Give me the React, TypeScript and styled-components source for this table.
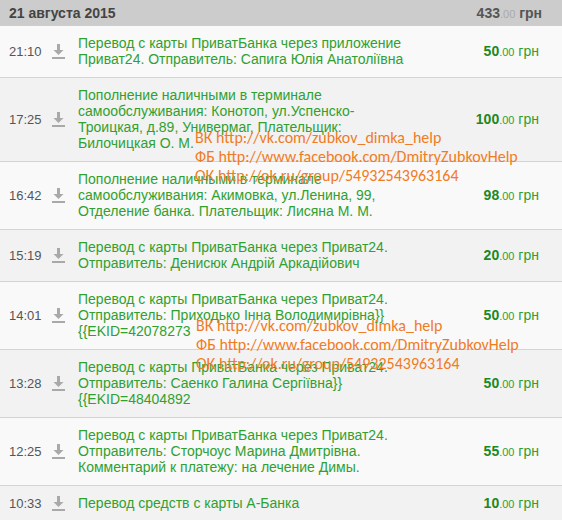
import React from "react";
import styled, { createGlobalStyle } from "styled-components";

const Global = createGlobalStyle`
  html, body { margin: 0; padding: 0; background: #f2f2f2; }
  body { font-family: Arial, "Liberation Sans", sans-serif; }
`;

const Page = styled.div`
  position: relative;
  width: 562px;
  min-height: 520px;
  background: #f2f2f2;
`;

const Header = styled.div`
  display: flex;
  align-items: center;
  justify-content: space-between;
  height: 26px;
  padding: 0 20px 0 9px;
  background: #cccccc;
  color: #444;
  font-size: 14px;
  font-weight: bold;
`;

const HeaderSum = styled.div`
  color: #555;
`;

const Cents = styled.span<{ $tone?: string }>`
  font-size: 11px;
  font-weight: normal;
  color: ${(p) => p.$tone || "inherit"};
`;

const Row = styled.div<{ $alt: boolean }>`
  display: flex;
  align-items: center;
  padding: 9px 23px 10px 9px;
  background: ${(p) => (p.$alt ? "#f2f2f2" : "#f9f9f9")};
  border-bottom: 1px solid #d4d4d4;
  &:last-child { border-bottom: none; }
`;

const Time = styled.div`
  width: 43px;
  flex: none;
  color: #555;
  font-size: 13px;
`;

const IconBox = styled.div`
  width: 26px;
  flex: none;
  display: flex;
  align-items: center;
`;

const Desc = styled.div`
  flex: 1;
  color: #30a030;
  font-size: 14px;
  line-height: 16px;
  white-space: nowrap;
`;

const Line = styled.div``;

const Amount = styled.div`
  flex: none;
  color: #30a030;
  font-size: 14px;
  white-space: nowrap;
  b { color: #1d881d; }
`;

const Watermark = styled.div<{ $top: number; $left: number }>`
  position: absolute;
  top: ${(p) => p.$top}px;
  left: ${(p) => p.$left}px;
  color: #f07b25;
  font-family: Carlito, Lato, "Open Sans", sans-serif;
  font-size: 16px;
  line-height: 19px;
  white-space: nowrap;
  pointer-events: none;
`;

const DownIcon = () => (
  <svg width="13" height="16" viewBox="0 0 13 16">
    <rect x="5" y="1" width="3" height="7" fill="#a9a9a9" />
    <polygon points="1.5,7 11.5,7 6.5,12" fill="#a9a9a9" />
    <rect x="0" y="14" width="13" height="2" fill="#a9a9a9" />
  </svg>
);

const rows = [
  { t: "21:10", lines: ["Перевод с карты ПриватБанка через приложение", "Приват24. Отправитель: Сапига Юлія Анатоліївна"], a: "50" },
  { t: "17:25", lines: ["Пополнение наличными в терминале", "самообслуживания: Конотоп, ул.Успенско-", "Троицкая, д.89, Универмаг, Плательщик:", "Билочицкая О. М."], a: "100" },
  { t: "16:42", lines: ["Пополнение наличными в терминале", "самообслуживания: Акимовка, ул.Ленина, 99,", "Отделение банка. Плательщик: Лисяна М. М."], a: "98" },
  { t: "15:19", lines: ["Перевод с карты ПриватБанка через Приват24.", "Отправитель: Денисюк Андрій Аркадійович"], a: "20" },
  { t: "14:01", lines: ["Перевод с карты ПриватБанка через Приват24.", "Отправитель: Приходько Інна Володимирівна}}", "{{EKID=42078273"], a: "50" },
  { t: "13:28", lines: ["Перевод с карты ПриватБанка через Приват24.", "Отправитель: Саенко Галина Сергіївна}}", "{{EKID=48404892"], a: "50" },
  { t: "12:25", lines: ["Перевод с карты ПриватБанка через Приват24.", "Отправитель: Сторчоус Марина Дмитрівна.", "Комментарий к платежу: на лечение Димы."], a: "55" },
  { t: "10:33", lines: ["Перевод средств с карты А-Банка"], a: "10" },
];

const wmLines = [
  "ВК http://vk.com/zubkov_dimka_help",
  "ФБ http://www.facebook.com/DmitryZubkovHelp",
  "ОК http://ok.ru/group/54932543963164",
];

const Mark = ({ top, left }: { top: number; left: number }) => (
  <Watermark $top={top} $left={left}>
    {wmLines.map((l) => (
      <Line key={l}>{l}</Line>
    ))}
  </Watermark>
);

export default function App() {
  return (
    <Page>
      <Global />
      <Header>
        <span>21 августа 2015</span>
        <HeaderSum>
          433<Cents $tone="#aaa">.00</Cents> грн
        </HeaderSum>
      </Header>
      {rows.map((r, i) => (
        <Row key={r.t} $alt={i % 2 === 1}>
          <Time>{r.t}</Time>
          <IconBox>
            <DownIcon />
          </IconBox>
          <Desc>
            {r.lines.map((l, j) => (
              <Line key={j}>{l}</Line>
            ))}
          </Desc>
          <Amount>
            <b>{r.a}</b>
            <Cents>.00</Cents> грн
          </Amount>
        </Row>
      ))}
      <Mark top={128} left={195} />
      <Mark top={316} left={196} />
    </Page>
  );
}
